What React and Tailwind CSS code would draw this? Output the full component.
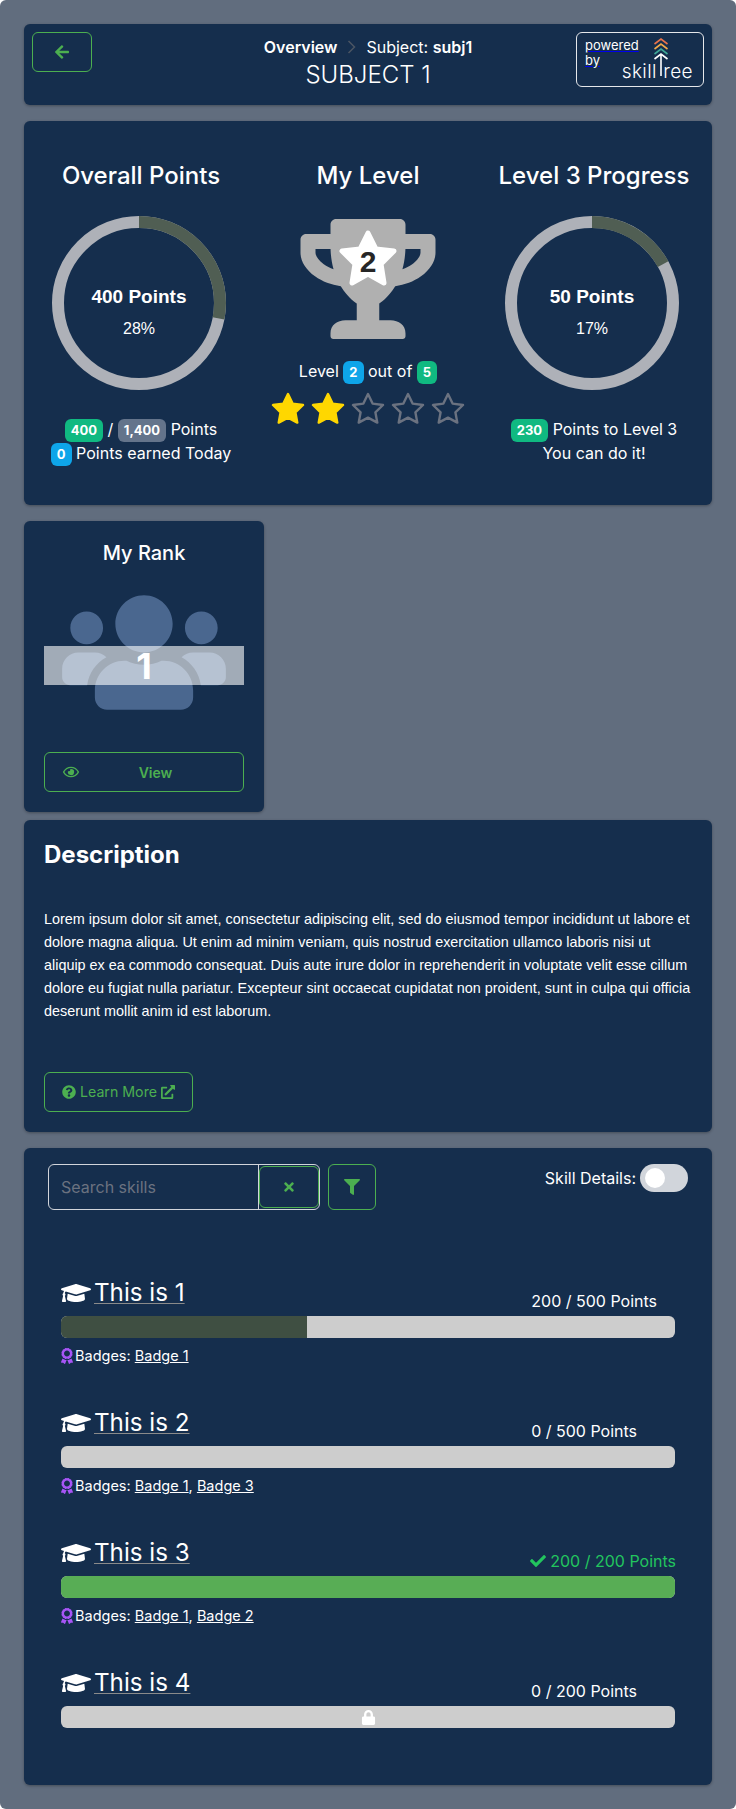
import { FaArrowLeft, FaAward, FaCheck, FaExternalLinkAlt, FaFilter, FaGraduationCap, FaLock, FaQuestionCircle, FaRegEye, FaTimes, FaTrophy, FaUsers } from 'react-icons/fa';

const font = { fontFamily: 'Inter, sans-serif' };

const Badge = ({ color, children }) => (
    <span className={`inline-block ${color} text-white font-bold text-[13px] leading-[23px] h-[23px] px-[6px] rounded-md align-middle`}>{children}</span>
);

const Card = ({ className = '', children }) => (
    <div className={`bg-[#152e4d] rounded-md shadow-[0_1px_3px_rgba(0,0,0,0.3)] ${className}`}>{children}</div>
);

const Ring = ({ pct, points, label }) => {
    const r = 81;
    const c = 2 * Math.PI * r;
    return (
        <div className="relative w-[174px] h-[174px]">
            <svg width="174" height="174" viewBox="0 0 174 174">
                <circle cx="87" cy="87" r={r} fill="none" stroke="#aeb1b8" strokeWidth="12" />
                <circle cx="87" cy="87" r={r} fill="none" stroke="#505e53" strokeWidth="12"
                    strokeDasharray={`${(c * pct) / 100} ${c}`} transform="rotate(-90 87 87)" />
            </svg>
            <div className="absolute inset-0 flex flex-col items-center pt-[69px] text-white font-['Liberation_Sans',sans-serif]">
                <div className="text-[19px] font-bold leading-[24px]">{points} Points</div>
                <div className="text-[16px] leading-[20px] mt-[10px]">{label}</div>
            </div>
        </div>
    );
};

const Star = ({ filled }) => (
    <svg width="34" height="32" viewBox="0 0 34 32">
        <polygon points="17,2 21.6,11.6 32,13 24.4,20.3 26.3,30.6 17,25.6 7.7,30.6 9.6,20.3 2,13 12.4,11.6"
            fill={filled ? '#ffd700' : 'none'} stroke={filled ? '#ffd700' : '#6b7280'} strokeWidth="2.4" strokeLinejoin="round" />
    </svg>
);

const Skill = ({ name, points, status, fill, badges, lock, pointsRight }) => (
    <div className="h-[130px]">
        <div className="flex items-start justify-between h-[47px]">
            <div className="flex items-center h-[34px] mt-[7px] text-white">
                <FaGraduationCap className="w-[30px] h-[24px]" />
                <a className="ml-[3px] text-[24.2px] leading-[30px] underline decoration-[#8a8a8a] decoration-1 underline-offset-2">{name}</a>
            </div>
            <div className={`flex items-center gap-[4px] mt-[20px] text-[16px] leading-[24px] ${status ? 'text-[#22c55e]' : 'text-white'}`} style={{ marginRight: pointsRight }}>
                {status && <FaCheck className="w-[16px] h-[16px]" />}
                {points}
            </div>
        </div>
        <div className="relative h-[22px] rounded-md bg-[#cdcdcd] overflow-hidden flex items-center justify-center">
            {fill && <div className={`absolute left-0 top-0 bottom-0 ${fill}`} />}
            {lock && <FaLock className="text-white w-[15px] h-[15px]" />}
        </div>
        {badges && (
            <div className="flex items-center mt-[6px] text-[14.5px] leading-[24px] text-white">
                <FaAward className="text-[#a855f7] w-[12px] h-[16px] mr-[2px]" />
                Badges:&nbsp;
                {badges.map((b, i) => (
                    <span key={b}>{i > 0 && ', '}<a className="underline">{b}</a></span>
                ))}
            </div>
        )}
    </div>
);

const App = () => {
    return (
        <div style={font} className="bg-[#616d7e] rounded-md min-h-[1809px] px-[24px] pt-[24px] text-white">
            <Card className="h-[81px] flex items-start justify-between px-[8px] pt-[8px]">
                <div className="w-[128px]">
                    <button className="w-[60px] h-[40px] border border-[#4caf50] rounded-md flex items-center justify-center text-[#4caf50]">
                        <FaArrowLeft className="w-[14px] h-[16px]" />
                    </button>
                </div>
                <div className="text-center pt-[3px]">
                    <div className="text-[16px] leading-[24px] flex items-center justify-center">
                        <span className="font-semibold">Overview</span>
                        <svg className="mx-[10px]" width="9" height="14" viewBox="0 0 9 14"><path d="M1.5 1l6 6-6 6" fill="none" stroke="#4b5563" strokeWidth="1.5" /></svg>
                        <span>Subject: <b className="font-semibold">subj1</b></span>
                    </div>
                    <div className="text-[24px] leading-[32px] font-light">SUBJECT 1</div>
                </div>
                <div className="relative w-[128px] h-[55px] border border-[#e5e7eb] rounded-md">
                    <div className="absolute left-[8px] top-[5px] flex flex-col items-start text-[13px] leading-[15px] underline decoration-[#0000ee]">
                        <span>powered</span>
                        <span>by</span>
                    </div>
                    <svg className="absolute left-[76px] top-[5px]" width="16" height="38" viewBox="0 0 16 38" fill="none" strokeWidth="1.6">
                        <path d="M1.5 6L8 1l6.5 5" stroke="#e8734a" />
                        <path d="M1.5 11L8 6l6.5 5" stroke="#f0a94a" />
                        <path d="M1.5 16L8 11l6.5 5" stroke="#3fa796" />
                        <path d="M1.5 21L8 16l6.5 5M8 16v22" stroke="#ffffff" />
                    </svg>
                    <div className="absolute right-[10px] top-[35px] text-[19px] leading-[8px] font-light tracking-[0.4px]">skill<span className="text-transparent">t</span>ree</div>
                </div>
            </Card>

            <Card className="h-[384px] mt-[16px] grid grid-cols-3 px-[8px] pt-[39px]">
                <div className="flex flex-col items-center pr-[10px]">
                    <div className="text-[24px] leading-[32px] font-medium ml-[4px]">Overall Points</div>
                    <div className="mt-[24px]"><Ring pct={28} points="400" label="28%" /></div>
                    <div className="mt-[28px] ml-[4px] text-[16px] leading-[23px] text-center whitespace-nowrap">
                        <div><Badge color="bg-[#10b981]">400</Badge> / <Badge color="bg-[#64748b]">1,400</Badge> Points</div>
                        <div><Badge color="bg-[#0ea5e9]">0</Badge> Points earned Today</div>
                    </div>
                </div>
                <div className="flex flex-col items-center">
                    <div className="text-[24px] leading-[32px] font-medium">My Level</div>
                    <div className="relative mt-[27px] w-[136px] h-[120px] flex items-center justify-center">
                        <FaTrophy className="w-[136px] h-[120px] text-[#b0b0b0]" />
                        <svg className="absolute left-[38px] top-[11px]" width="60" height="58" viewBox="0 0 60 58">
                            <polygon points="30,3 38,19 56,21 43,34 46,53 30,44 14,53 17,34 4,21 22,19" fill="#fff" stroke="#fff" strokeWidth="5" strokeLinejoin="round" />
                        </svg>
                        <div className="absolute inset-x-0 top-[23px] text-center text-[#262626] text-[30px] leading-[40px] font-bold font-['Liberation_Sans',sans-serif]">2</div>
                    </div>
                    <div className="mt-[20px] text-[16px] leading-[24px]">Level <Badge color="bg-[#0ea5e9]">2</Badge> out of <Badge color="bg-[#10b981]">5</Badge></div>
                    <div className="mt-[8px] flex gap-[6px]">
                        <Star filled /><Star filled /><Star /><Star /><Star />
                    </div>
                </div>
                <div className="flex flex-col items-center">
                    <div className="text-[24px] leading-[32px] font-medium whitespace-nowrap ml-[4px]">Level 3 Progress</div>
                    <div className="mt-[24px]"><Ring pct={17} points="50" label="17%" /></div>
                    <div className="mt-[28px] ml-[4px] text-[16px] leading-[23px] text-center">
                        <div><Badge color="bg-[#10b981]">230</Badge> Points to Level 3</div>
                        <div>You can do it!</div>
                    </div>
                </div>
            </Card>

            <Card className="w-[240px] h-[291px] mt-[16px] px-[20px] pt-[18px] flex flex-col items-center">
                <div className="text-[20px] leading-[28px] font-medium">My Rank</div>
                <div className="relative w-[200px] h-[131px] mt-[20px] flex justify-center">
                    <FaUsers className="w-[164px] h-[131px] text-[#4a678f]" />
                    <div className="absolute left-0 right-0 top-[59px] h-[39px] bg-white/60 flex items-center justify-center text-[36px] font-bold">1</div>
                </div>
                <button className="mt-[34px] w-[200px] h-[40px] border border-[#4caf50] rounded-md flex items-center text-[#4caf50] text-[14px] font-semibold px-[18px]">
                    <FaRegEye className="w-[16px] h-[16px]" />
                    <span className="flex-1 text-center pl-[7px]">View</span>
                </button>
            </Card>

            <Card className="h-[312px] mt-[8px] px-[20px] pt-[19px]">
                <div className="text-[24px] leading-[32px] font-bold">Description</div>
                <p className="mt-[37px] font-['Liberation_Sans',sans-serif] text-[14.4px] leading-[23px]">
                    Lorem ipsum dolor sit amet, consectetur adipiscing elit, sed do eiusmod tempor incididunt ut labore et dolore magna aliqua. Ut enim ad minim veniam, quis nostrud exercitation ullamco laboris nisi ut aliquip ex ea commodo consequat. Duis aute irure dolor in reprehenderit in voluptate velit esse cillum dolore eu fugiat nulla pariatur. Excepteur sint occaecat cupidatat non proident, sunt in culpa qui officia deserunt mollit anim id est laborum.
                </p>
                <button className="mt-[49px] w-[149px] h-[40px] border border-[#4caf50] rounded-md flex items-center justify-center gap-[4px] text-[#4caf50] text-[14.2px]">
                    <FaQuestionCircle className="w-[14px] h-[14px]" />
                    Learn More
                    <FaExternalLinkAlt className="w-[14px] h-[14px]" />
                </button>
            </Card>

            <Card className="h-[637px] mt-[16px] px-[24px] pt-[16px]">
                <div className="flex items-start h-[106px]">
                    <div className="flex w-[272px] h-[46px] border border-[#d1d5db] rounded-md">
                        <div className="w-[210px] border-r border-[#d1d5db] pl-[12px] flex items-center text-[16px] text-[#6b7280]">Search skills</div>
                        <button className="flex-1 border border-[#4caf50] rounded-md flex items-center justify-center text-[#4caf50] my-px">
                            <FaTimes className="w-[12px] h-[14px]" />
                        </button>
                    </div>
                    <button className="ml-[8px] w-[48px] h-[46px] border border-[#4caf50] rounded-md flex items-center justify-center text-[#4caf50]">
                        <FaFilter className="w-[16px] h-[16px]" />
                    </button>
                    <div className="ml-auto flex items-center h-[28px] text-[16px]">
                        Skill Details:
                        <div className="ml-[4px] w-[48px] h-[28px] rounded-full bg-[#d1d5db] relative">
                            <div className="absolute left-[5px] top-[4px] w-[20px] h-[20px] rounded-full bg-white" />
                        </div>
                    </div>
                </div>
                <div className="px-[13px] mt-[-1px]">
                    <Skill name="This is 1" points="200 / 500 Points" pointsRight="18px" fill="w-[40%] bg-[#3f4f42]" badges={['Badge 1']} />
                    <Skill name="This is 2" points="0 / 500 Points" pointsRight="38px" badges={['Badge 1', 'Badge 3']} />
                    <Skill name="This is 3" points="200 / 200 Points" pointsRight="-1px" status fill="w-full bg-[#58ad55]" badges={['Badge 1', 'Badge 2']} />
                    <Skill name="This is 4" points="0 / 200 Points" pointsRight="38px" lock />
                </div>
            </Card>
        </div>
    );
};

export default App;
